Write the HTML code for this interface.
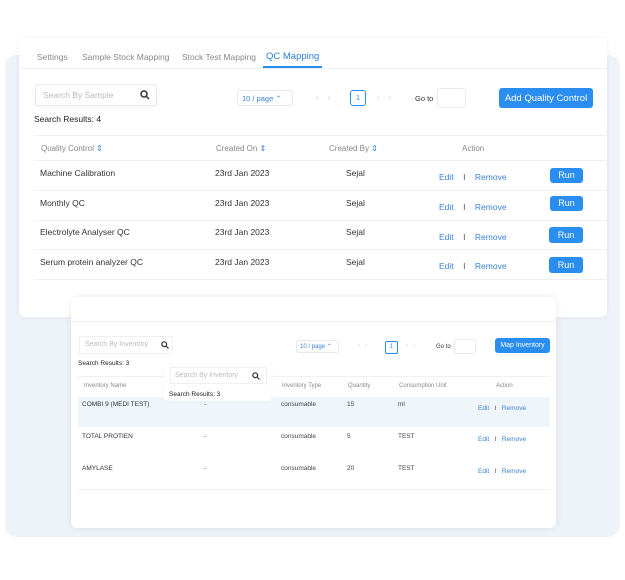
<!DOCTYPE html>
<html><head><style>
*{margin:0;padding:0;box-sizing:border-box}
body{width:625px;height:580px;background:#fff;position:relative;font-family:"Liberation Sans",sans-serif;overflow:hidden}
.a{position:absolute;white-space:nowrap}
.bg{left:5px;top:55px;width:615px;height:482px;background:#eef2f9;border-radius:12px}
.card{background:#fff;border-radius:6px;box-shadow:0 0 6px rgba(0,0,0,.06)}
.t{font-size:8px;color:#888}
.d{font-size:8.5px;color:#333}
.l{color:#3b82d6}
.btn{background:#2a8ef0;color:#fff;border-radius:3px;text-align:center}
.box{border:1px solid #e8e8e8;border-radius:3px;background:#fff}
.sep{height:1px;background:#eef0f3}
</style></head><body>
<div class="a bg"></div>
<div class="a card" style="left:19px;top:38px;width:588px;height:279px"></div>
<div class="a t" style="left:37px;top:52px;font-size:8.5px">Settings</div>
<div class="a t" style="left:82px;top:52px;font-size:8.5px">Sample Stock Mapping</div>
<div class="a t" style="left:182px;top:52px;font-size:8.5px">Stock Test Mapping</div>
<div class="a" style="left:266px;top:51px;font-size:9.5px;color:#2a7fd8">QC Mapping</div>
<div class="a" style="left:263px;top:66px;width:59px;height:2px;background:#2a8ef0"></div>
<div class="a sep" style="left:19px;top:68px;width:588px"></div>
<div class="a box" style="left:35px;top:84px;width:122px;height:22px;box-shadow:0 1px 3px rgba(0,0,0,.05)"></div>
<div class="a" style="left:43px;top:90px;font-size:8.5px;color:#bbb">Search By Sample</div>
<svg class="a" style="left:140px;top:90px" width="10" height="10"><circle cx="4" cy="4" r="3" fill="none" stroke="#333" stroke-width="1.5"/><path d="M6.5 6.5L9 9" stroke="#333" stroke-width="1.5"/></svg>
<div class="a" style="left:34px;top:114px;font-size:8.5px;color:#222">Search Results: 4</div>
<div class="a box" style="left:237px;top:90px;width:56px;height:16px"></div>
<div class="a" style="left:242px;top:94px;font-size:7.5px;color:#3b82d6">10 / page ⌃</div>
<div class="a" style="left:316px;top:93px;font-size:8px;color:#ccc">‹ &nbsp;&nbsp;&nbsp;‹</div>
<div class="a" style="left:350px;top:90px;width:16px;height:16px;border:1px solid #2a8ef0;border-radius:3px;font-size:7.5px;color:#2a8ef0;text-align:center;line-height:14px">1</div>
<div class="a" style="left:377px;top:93px;font-size:8px;color:#ccc">› &nbsp;&nbsp;&nbsp;›</div>
<div class="a" style="left:415px;top:94px;font-size:7.5px;color:#333">Go to</div>
<div class="a box" style="left:437px;top:88px;width:29px;height:20px"></div>
<div class="a btn" style="left:499px;top:88px;width:94px;height:20px;font-size:9.5px;line-height:21px">Add Quality Control</div>
<div class="a sep" style="left:34px;top:135px;width:573px"></div>
<div class="a t" style="left:41px;top:144px">Quality Control <span class="l">⇕</span></div>
<div class="a t" style="left:216px;top:144px">Created On <span class="l">⇕</span></div>
<div class="a t" style="left:329px;top:144px">Created By <span class="l">⇕</span></div>
<div class="a t" style="left:462px;top:144px">Action</div>
<div class="a sep" style="left:34px;top:160px;width:573px"></div>
<div class="a d" style="left:40px;top:168px">Machine Calibration</div>
<div class="a d" style="left:40px;top:198px">Monthly QC</div>
<div class="a d" style="left:40px;top:227px">Electrolyte Analyser QC</div>
<div class="a d" style="left:40px;top:257px">Serum protein analyzer QC</div>
<div class="a d" style="left:215px;top:168px">23rd Jan 2023</div>
<div class="a d" style="left:215px;top:198px">23rd Jan 2023</div>
<div class="a d" style="left:215px;top:227px">23rd Jan 2023</div>
<div class="a d" style="left:215px;top:257px">23rd Jan 2023</div>
<div class="a d" style="left:346px;top:168px">Sejal</div>
<div class="a d" style="left:346px;top:198px">Sejal</div>
<div class="a d" style="left:346px;top:227px">Sejal</div>
<div class="a d" style="left:346px;top:257px">Sejal</div>
<div class="a sep" style="left:34px;top:190px;width:573px"></div>
<div class="a sep" style="left:34px;top:220px;width:573px"></div>
<div class="a sep" style="left:34px;top:249px;width:573px"></div>
<div class="a sep" style="left:34px;top:279px;width:573px"></div>
<div class="a l" style="left:439px;top:172px;font-size:8.5px">Edit &nbsp;&nbsp;&nbsp;<span style="color:#555">I</span> &nbsp;&nbsp;&nbsp;Remove</div>
<div class="a l" style="left:439px;top:202px;font-size:8.5px">Edit &nbsp;&nbsp;&nbsp;<span style="color:#555">I</span> &nbsp;&nbsp;&nbsp;Remove</div>
<div class="a l" style="left:439px;top:232px;font-size:8.5px">Edit &nbsp;&nbsp;&nbsp;<span style="color:#555">I</span> &nbsp;&nbsp;&nbsp;Remove</div>
<div class="a l" style="left:439px;top:261px;font-size:8.5px">Edit &nbsp;&nbsp;&nbsp;<span style="color:#555">I</span> &nbsp;&nbsp;&nbsp;Remove</div>
<div class="a btn" style="left:550px;top:168px;width:33px;height:15px;font-size:9px;line-height:15px">Run</div>
<div class="a btn" style="left:550px;top:196px;width:33px;height:15px;font-size:9px;line-height:15px">Run</div>
<div class="a btn" style="left:549px;top:227px;width:34px;height:16px;font-size:9px;line-height:16px">Run</div>
<div class="a btn" style="left:549px;top:257px;width:34px;height:16px;font-size:9px;line-height:16px">Run</div>

<div class="a card" style="left:71px;top:297px;width:485px;height:231px;box-shadow:0 0 8px rgba(0,0,0,.08)"></div>
<div class="a sep" style="left:71px;top:321px;width:485px"></div>
<div class="a" style="left:79px;top:336px;width:94px;height:18px;border:1px solid #f0f0f0"></div>
<div class="a" style="left:85px;top:341px;font-size:7px;color:#bbb">Search By Inventory</div>
<svg class="a" style="left:161px;top:341px" width="8" height="8"><circle cx="3.2" cy="3.2" r="2.4" fill="none" stroke="#333" stroke-width="1.2"/><path d="M5 5L7.5 7.5" stroke="#333" stroke-width="1.2"/></svg>
<div class="a" style="left:78px;top:360px;font-size:6.5px;color:#222">Search Results: 3</div>
<div class="a sep" style="left:78px;top:376px;width:472px"></div>
<div class="a box" style="left:296px;top:340px;width:43px;height:13px"></div>
<div class="a" style="left:300px;top:343px;font-size:6px;color:#3b82d6">10 / page ⌃</div>
<div class="a" style="left:358px;top:343px;font-size:6px;color:#ccc">‹ &nbsp;&nbsp;‹</div>
<div class="a" style="left:385px;top:341px;width:13px;height:13px;border:1px solid #2a8ef0;border-radius:2px;font-size:6px;color:#2a8ef0;text-align:center;line-height:11px">1</div>
<div class="a" style="left:406px;top:343px;font-size:6px;color:#ccc">› &nbsp;&nbsp;›</div>
<div class="a" style="left:436px;top:344px;font-size:6px;color:#333">Go to</div>
<div class="a box" style="left:454px;top:339px;width:22px;height:15px"></div>
<div class="a btn" style="left:495px;top:338px;width:55px;height:15px;font-size:7px;line-height:15px">Map Inventory</div>
<div class="a t" style="left:84px;top:383px;font-size:6px">Inventory Name</div>
<div class="a t" style="left:282px;top:383px;font-size:6px">Inventory Type</div>
<div class="a t" style="left:348px;top:383px;font-size:6px">Quantity</div>
<div class="a t" style="left:399px;top:383px;font-size:6px">Consumption Unit</div>
<div class="a t" style="left:496px;top:383px;font-size:6px">Action</div>
<div class="a" style="left:78px;top:397px;width:472px;height:30px;background:#eef5fb"></div>
<div class="a" style="left:164px;top:366px;width:107px;height:35px;background:#fff;box-shadow:0 0 4px rgba(0,0,0,.04)"></div>
<div class="a" style="left:170px;top:367px;width:97px;height:17px;border:1px solid #f0f0f0;background:#fff"></div>
<div class="a" style="left:175px;top:372px;font-size:7px;color:#bbb">Search By Inventory</div>
<svg class="a" style="left:252px;top:372px" width="8" height="8"><circle cx="3.2" cy="3.2" r="2.4" fill="none" stroke="#333" stroke-width="1.2"/><path d="M5 5L7.5 7.5" stroke="#333" stroke-width="1.2"/></svg>
<div class="a" style="left:169px;top:391px;font-size:6.5px;color:#222">Search Results: 3</div>
<div class="a" style="left:82px;top:401px;font-size:6.5px;color:#333">COMBI 9 (MEDI TEST)</div>
<div class="a" style="left:82px;top:433px;font-size:6.5px;color:#333">TOTAL PROTIEN</div>
<div class="a" style="left:82px;top:465px;font-size:6.5px;color:#333">AMYLASE</div>
<div class="a d" style="left:204px;top:401px;font-size:6.5px">-</div>
<div class="a d" style="left:204px;top:433px;font-size:6.5px">-</div>
<div class="a d" style="left:204px;top:465px;font-size:6.5px">-</div>
<div class="a" style="left:281px;top:401px;font-size:6.5px;color:#444">consumable</div>
<div class="a" style="left:281px;top:433px;font-size:6.5px;color:#444">consumable</div>
<div class="a" style="left:281px;top:465px;font-size:6.5px;color:#444">consumable</div>
<div class="a" style="left:347px;top:401px;font-size:6.5px;color:#444">15</div>
<div class="a" style="left:347px;top:433px;font-size:6.5px;color:#444">5</div>
<div class="a" style="left:347px;top:465px;font-size:6.5px;color:#444">20</div>
<div class="a" style="left:398px;top:401px;font-size:6.5px;color:#444">ml</div>
<div class="a" style="left:398px;top:433px;font-size:6.5px;color:#444">TEST</div>
<div class="a" style="left:398px;top:465px;font-size:6.5px;color:#444">TEST</div>
<div class="a l" style="left:478px;top:405px;font-size:6.5px">Edit &nbsp;&nbsp;<span style="color:#555">I</span> &nbsp;&nbsp;Remove</div>
<div class="a l" style="left:478px;top:436px;font-size:6.5px">Edit &nbsp;&nbsp;<span style="color:#555">I</span> &nbsp;&nbsp;Remove</div>
<div class="a l" style="left:478px;top:468px;font-size:6.5px">Edit &nbsp;&nbsp;<span style="color:#555">I</span> &nbsp;&nbsp;Remove</div>
<div class="a sep" style="left:78px;top:489px;width:472px"></div>
</body></html>
